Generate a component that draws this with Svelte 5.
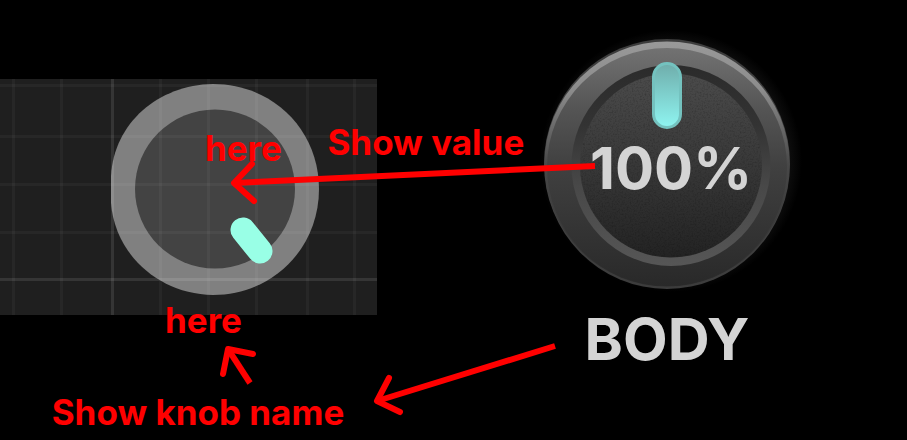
<script>
  let value = 100
  let name = 'BODY'

  const COLUMNS = [13, 61, 160, 208, 256, 307, 354]
  const ROWS = [6, 57, 105, 153]

  // note positions are percentages of the board
  const NOTES = [
    { text: 'here', x: 22.6, y: 29.1 },
    { text: 'Show value', x: 36.1, y: 27.7 },
    { text: 'here', x: 18.2, y: 68.2 },
    { text: 'Show knob name', x: 5.7, y: 89.1 }
  ]
</script>

<main class="board">
  <section class="current">
    <svg viewBox="0 0 377 236" role="img" aria-label="Current knob">
      <rect width="377" height="236" fill="#1f1f1f" />
      <path
        d="M111 97 C114 44 158 6 213 5 C273 5 319 51 319 110 C319 169 273 216 213 216 C158 215 115 175 111 124 Z"
        fill="#808080"
      />
      <ellipse cx="215" cy="110" rx="80" ry="79.5" fill="#434343" />
      <g stroke="#fff" stroke-opacity="0.04" stroke-width="3">
        {#each COLUMNS as x}
          <line x1={x + 0.5} x2={x + 0.5} y1="0" y2="236" />
        {/each}
        {#each ROWS as y}
          <line x1="0" x2="377" y1={y + 0.5} y2={y + 0.5} />
        {/each}
      </g>
      <g stroke="#fff" stroke-opacity="0.1" stroke-width="3">
        <line x1="112.5" x2="112.5" y1="0" y2="236" />
        <line x1="0" x2="377" y1="200.5" y2="200.5" />
      </g>
      <line x1="243" y1="151" x2="260" y2="172" stroke="#99ffe6" stroke-width="25" stroke-linecap="round" />
    </svg>
  </section>

  <section class="wanted">
    <div class="knob">
      <svg viewBox="0 0 270 270" aria-hidden="true">
        <defs>
          <linearGradient id="edge" x1="0" y1="0" x2="0" y2="1">
            <stop offset="0" stop-color="#3c3c3c" />
            <stop offset="0.5" stop-color="#444" />
            <stop offset="1" stop-color="#3c3c3c" />
          </linearGradient>
          <linearGradient id="shine" x1="0" y1="0" x2="0" y2="1">
            <stop offset="0" stop-color="#999" />
            <stop offset="0.2" stop-color="#8c8c8c" />
            <stop offset="0.5" stop-color="#484848" />
            <stop offset="1" stop-color="#2c2c2c" />
          </linearGradient>
          <linearGradient id="body" x1="0" y1="0" x2="0" y2="1">
            <stop offset="0" stop-color="#727272" />
            <stop offset="0.25" stop-color="#555" />
            <stop offset="0.5" stop-color="#404040" />
            <stop offset="1" stop-color="#292929" />
          </linearGradient>
          <linearGradient id="groove" x1="0" y1="0" x2="0" y2="1">
            <stop offset="0" stop-color="#2b2b2b" />
            <stop offset="0.3" stop-color="#333" />
            <stop offset="0.6" stop-color="#484848" />
            <stop offset="1" stop-color="#565656" />
          </linearGradient>
          <linearGradient id="cap" x1="0" y1="0" x2="0" y2="1">
            <stop offset="0" stop-color="#4b4b4b" />
            <stop offset="0.5" stop-color="#383838" />
            <stop offset="1" stop-color="#232323" />
          </linearGradient>
          <linearGradient id="light" x1="0" y1="0" x2="0" y2="1">
            <stop offset="0" stop-color="#6fadab" />
            <stop offset="1" stop-color="#8ff5f1" />
          </linearGradient>
          <radialGradient id="glow">
            <stop offset="0.88" stop-color="#101010" />
            <stop offset="1" stop-color="#101010" stop-opacity="0" />
          </radialGradient>
          <filter id="grain" x="0" y="0" width="1" height="1">
            <feTurbulence type="fractalNoise" baseFrequency="0.6" numOctaves="2" seed="4" />
            <feColorMatrix values="0 0 0 0 0  0 0 0 0 0  0 0 0 0 0  2 0 0 0 -0.9" />
            <feComposite in2="SourceGraphic" operator="in" />
          </filter>
        </defs>
        <circle cx="139" cy="132" r="131" fill="url(#glow)" />
        <ellipse cx="135" cy="135" rx="123" ry="125" fill="url(#edge)" />
        <ellipse cx="135" cy="135" rx="122.5" ry="122.5" fill="url(#shine)" />
        <ellipse cx="135" cy="138" rx="120" ry="119" fill="url(#body)" />
        <ellipse cx="139" cy="136.5" rx="99.5" ry="100.5" fill="url(#groove)" />
        <ellipse cx="139" cy="136.5" rx="91" ry="92" fill="url(#cap)" />
        <ellipse cx="139" cy="136.5" rx="91" ry="92" filter="url(#grain)" opacity="0.22" />
        <rect x="121.5" y="34.5" width="27" height="64" rx="13.5" fill="url(#light)" stroke="#74c2bf" stroke-width="3" />
      </svg>
      <output class="value">{value}%</output>
    </div>
    <h2>{name}</h2>
  </section>

  <svg class="arrows" viewBox="0 0 907 440" preserveAspectRatio="none" aria-hidden="true">
    <g fill="none" stroke="#f00" stroke-width="6" stroke-linejoin="round">
      <path d="M595 166 L234 183" />
      <path d="M252 164 L234 183 L254 201" stroke-linecap="round" />
      <path d="M555 346 L377 401" />
      <path d="M389 378 L377 401 L400 412" stroke-linecap="round" />
      <path d="M250 383 L228 349" />
      <path d="M223 374 L228 349 L253 354" stroke-linecap="round" />
    </g>
  </svg>

  {#each NOTES as note}
    <p class="note" style="left: {note.x}%; top: {note.y}%">{note.text}</p>
  {/each}
</main>

<style>
  :global(body) {
    background: #000;
  }

  .board {
    position: relative;
    display: grid;
    grid-template-columns: 377fr 530fr;
    align-items: start;
    min-height: 100vh;
    font-family: Inter, sans-serif;
    background: #000;
  }

  .current {
    padding-top: 79px;
  }

  svg {
    display: block;
    width: 100%;
  }

  .wanted {
    display: flex;
    flex-direction: column;
    align-items: center;
    padding: 29px 0 0 50px;
  }

  .knob {
    display: grid;
    place-items: center;
    width: 270px;
  }

  .knob svg,
  .value {
    grid-area: 1 / 1;
  }

  .value,
  h2 {
    color: #d4d4d4;
    font-size: 58px;
    font-weight: 700;
    line-height: 72px;
  }

  .value {
    padding: 8px 0 0 8px;
  }

  h2 {
    margin: 4px 0 0;
  }

  .arrows {
    position: absolute;
    inset: 0;
    height: 100%;
  }

  .note {
    position: absolute;
    margin: 0;
    color: #f00;
    font-size: 35px;
    font-weight: 700;
    line-height: 40px;
    white-space: nowrap;
  }
</style>
